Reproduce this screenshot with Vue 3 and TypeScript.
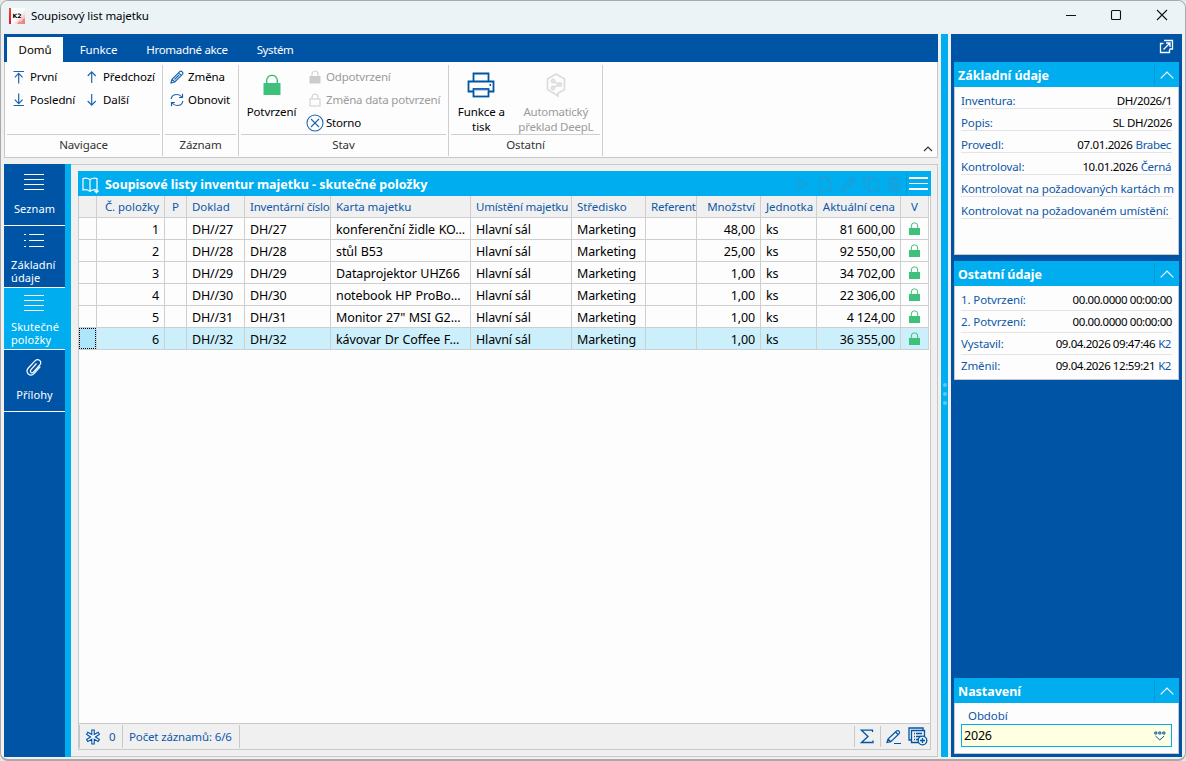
<script setup lang="ts">
interface Row {
  no: number
  card: string
  qty: string
  price: string
}

const columns: { label: string; cls: string }[] = [
  { label: '', cls: '' },
  { label: 'Č. položky', cls: 'num' },
  { label: 'P', cls: 'mid' },
  { label: 'Doklad', cls: '' },
  { label: 'Inventární číslo', cls: 'tight' },
  { label: 'Karta majetku', cls: '' },
  { label: 'Umístění majetku', cls: 'tight' },
  { label: 'Středisko', cls: '' },
  { label: 'Referent', cls: 'tight' },
  { label: 'Množství', cls: 'num' },
  { label: 'Jednotka', cls: 'unit' },
  { label: 'Aktuální cena', cls: 'num' },
  { label: 'V', cls: 'mid' },
]

const rows: Row[] = [
  { no: 1, card: 'konferenční židle KO...', qty: '48,00', price: '81 600,00' },
  { no: 2, card: 'stůl B53', qty: '25,00', price: '92 550,00' },
  { no: 3, card: 'Dataprojektor UHZ66', qty: '1,00', price: '34 702,00' },
  { no: 4, card: 'notebook HP ProBo...', qty: '1,00', price: '22 306,00' },
  { no: 5, card: 'Monitor 27" MSI G2...', qty: '1,00', price: '4 124,00' },
  { no: 6, card: 'kávovar Dr Coffee F...', qty: '1,00', price: '36 355,00' },
]

const basics = [
  { label: 'Inventura:', value: 'DH/2026/1', link: '' },
  { label: 'Popis:', value: 'SL DH/2026', link: '' },
  { label: 'Provedl:', value: '07.01.2026', link: 'Brabec' },
  { label: 'Kontroloval:', value: '10.01.2026', link: 'Černá' },
  { label: 'Kontrolovat na požadovaných kartách m', value: '', link: '' },
  { label: 'Kontrolovat na požadovaném umístění:', value: '', link: '' },
]

const others = [
  { label: '1. Potvrzení:', value: '00.00.0000 00:00:00', link: '' },
  { label: '2. Potvrzení:', value: '00.00.0000 00:00:00', link: '' },
  { label: 'Vystavil:', value: '09.04.2026 09:47:46', link: 'K2' },
  { label: 'Změnil:', value: '09.04.2026 12:59:21', link: 'K2' },
]
</script>

<template>
  <div class="window">
    <header class="titlebar">
      <svg class="logo" width="16" height="16" viewBox="0 0 16 16">
        <defs>
          <linearGradient id="lg" x1="0" y1="0" x2="0" y2="1">
            <stop offset="0" stop-color="#f04a28" /><stop offset="1" stop-color="#e01040" />
          </linearGradient>
          <linearGradient id="lf" x1="0" y1="0" x2="1" y2="1">
            <stop offset=".5" stop-color="#fff" /><stop offset="1" stop-color="#f0908c" />
          </linearGradient>
        </defs>
        <rect x="2" width="14" height="16" fill="url(#lf)" />
        <rect width="2" height="16" fill="url(#lg)" />
        <path d="M8 16l2-3 2 1 2-3 2-1v6z" fill="#ee7770" opacity=".7" />
        <text x="3.6" y="10" class="logo-text" textLength="9" lengthAdjust="spacingAndGlyphs">K2</text>
      </svg>
      <span class="app-title">Soupisový list majetku</span>
      <svg class="winbtns" width="106" height="14" viewBox="0 0 106 14" fill="none" stroke="#111" stroke-width="1.1">
        <path d="M1 7.5h10" />
        <rect x="46.5" y="2.5" width="9" height="9" rx="1" />
        <path d="M92 2l10 10M102 2l-10 10" />
      </svg>
    </header>

    <div class="body">
      <div class="left">
        <nav class="tabs">
          <span class="tab active">Domů</span>
          <span class="tab t2">Funkce</span>
          <span class="tab t3">Hromadné akce</span>
          <span class="tab t4">Systém</span>
        </nav>
        <section class="ribbon">
          <div class="group g-nav">
            <div class="gbody">
              <div class="col c-first">
                <div class="cmd"><svg class="ic" viewBox="0 0 14 14"><path d="M1.500 1.500h10.500M6.700 13.500V3.500M2.800 7.300L6.700 3.400l3.900 3.900" /></svg>První</div>
                <div class="cmd"><svg class="ic" viewBox="0 0 14 14"><path d="M1.500 12.500h10.500M6.700 .5v10M2.800 6.700L6.700 10.600l3.900-3.900" /></svg>Poslední</div>
              </div>
              <div class="col c-second">
                <div class="cmd"><svg class="ic" viewBox="0 0 14 14"><path d="M6.700 13V2M2.700 6L6.700 1.900 10.700 6" /></svg>Předchozí</div>
                <div class="cmd"><svg class="ic" viewBox="0 0 14 14"><path d="M6.700 1v11M2.700 8L6.700 12.100 10.700 8" /></svg>Další</div>
              </div>
            </div>
            <div class="gname">Navigace</div>
          </div>
          <div class="group g-rec">
            <div class="gbody">
              <div class="col c-rec">
                <div class="cmd"><svg class="ic" viewBox="0 0 14 14"><path d="M1 13l1-3.800L9.700 1.600q1.300-1 2.500.2t.2 2.500L4.800 12zM8.500 2.800l2.700 2.700M2 9.200L4.800 12M4.500 9.500L9 5" /></svg>Změna</div>
                <div class="cmd"><svg class="ic" viewBox="0 0 14 14"><path d="M1.200 6C1.500 3 4 1.500 7 1.500c2 0 3.700 1 4.800 2.500M12.500.8V4.500H9M12.800 8c-.3 3-2.800 4.500-5.800 4.500-2 0-3.700-1-4.800-2.500M1.500 13.200V9.500H5" /></svg>Obnovit</div>
              </div>
            </div>
            <div class="gname">Záznam</div>
          </div>
          <div class="group g-state">
            <div class="gbody">
              <div class="big b-lock">
                <svg width="18" height="22" viewBox="0 0 18 22"><path d="M3.700 9V6.500a5.300 5.300 0 0110.600 0V9" fill="none" stroke="#3ec27b" stroke-width="1.400" /><rect x=".5" y="9" width="17" height="12" fill="#3ec27b" /></svg>
                <span>Potvrzení</span>
              </div>
              <div class="col c-state">
                <div class="cmd off"><svg class="ic2" viewBox="0 0 16 16"><path d="M5 7V5a3 3 0 016 0v2" class="gr" /><rect x="2.500" y="7" width="11" height="7.500" fill="#ccc" /></svg>Odpotvrzení</div>
                <div class="cmd off"><svg class="ic2" viewBox="0 0 16 16"><path d="M5 7V5a3 3 0 016 0v2" class="gr" /><rect x="3" y="7" width="10" height="7" class="gr" /></svg>Změna data potvrzení</div>
                <div class="cmd"><svg class="ic3" viewBox="0 0 18 18"><circle cx="9" cy="9" r="8" /><path d="M5 5l8 8M13 5l-8 8" /></svg>Storno</div>
              </div>
            </div>
            <div class="gname">Stav</div>
          </div>
          <div class="group g-other">
            <div class="gbody">
              <div class="big b-print">
                <svg width="28" height="26" viewBox="0 0 28 26" fill="none" stroke="#0054a6" stroke-width="1.800"><path d="M6.500 9V1.500h15V9M6 19.500H1.500V9.500h25v10H22" /><rect x="6.500" y="17" width="15" height="7.500" /><path d="M7 18.300h14" stroke="#9cc0e0" stroke-width="1" /><path d="M22.500 13h1.500" /></svg>
                <span>Funkce a<br />tisk</span>
              </div>
              <div class="big b-deepl off">
                <svg width="20" height="24" viewBox="0 0 20 24" fill="none" stroke="#ddd" stroke-width="1.800"><path d="M10 1l8.500 5v10.500L12 20.200V23l-4.500-3L1.500 16.500V6z" /><circle cx="7" cy="8" r="1.500" /><circle cx="14" cy="11.500" r="1.500" /><circle cx="7" cy="15" r="1.500" /><path d="M8.500 9l4 2M8.500 14l4-2" /></svg>
                <span>Automatický<br />překlad DeepL</span>
              </div>
            </div>
            <div class="gname">Ostatní</div>
          </div>
          <svg class="collapse" width="10" height="6" viewBox="0 0 10 6"><path d="M1 5l4-4 4 4" fill="none" stroke="#333" stroke-width="1.200" /></svg>
        </section>

        <div class="work">
          <aside class="side">
            <div class="sitem"><svg class="lines" viewBox="0 0 20 18"><path d="M0 1.500h20M0 6.500h20M0 11.500h20M0 16.500h20" /></svg><span>Seznam</span></div>
            <div class="sitem s2"><svg class="lines" viewBox="0 0 20 18"><path d="M5 2.500h15M5 8.500h15M5 14.500h15M0 2.500h2M0 8.500h2M0 14.500h2" /></svg><span>Základní<br />údaje</span></div>
            <div class="sitem s3"><svg class="lines" viewBox="0 0 20 18"><path d="M0 1.500h20M0 6.500h20M0 11.500h20M0 16.500h20" /></svg><span>Skutečné<br />položky</span></div>
            <div class="sitem s4"><svg class="clipicon" width="18" height="20" viewBox="0 0 18 20" fill="none" stroke="#fff" stroke-width="1.200"><path d="M11.500 5.500L6 11.700q-1.200 1.600 0 2.700 1.300 1 2.600-.4l6.200-7q2-2.500-.1-4.600-2.400-1.900-4.700.4L3.300 10q-2.600 3.200 0 6 3 2.500 6-.6l6-6.700" /></svg><span>Přílohy</span></div>
          </aside>
          <main class="main">
            <div class="grid">
              <div class="ghead">
                <svg class="book" width="19" height="17" viewBox="0 0 19 17" fill="none" stroke="#fff" stroke-width="1.200"><path d="M8 2.500Q4.500.2 1 1.500v11.500q3.500-1 7 1.200 3.500-2.200 7-1.200V1.500Q11.500.2 8 2.500zM8 2.500V14" /><path d="M11.500 13.500h6l-3 3z" fill="#fff" stroke="none" /></svg>
                <span class="gtitle">Soupisové listy inventur majetku - skutečné položky</span>
                <svg class="tools" width="105" height="18" viewBox="0 0 105 18" fill="none" stroke="#239bd0" stroke-width="1.200">
                  <path d="M1 4v10l9-5z" /><path d="M23 2h7l3.500 3.500V16H23zM30 2v4h3.500" />
                  <path d="M45 16l1-4 9-9 3 2-9 9zM54 4l3 3" /><path d="M70 13h-3V2h8v2M71.500 5H81v11h-9.500z" />
                  <path d="M91 4.500h12M92.500 4.500v11.500h9V4.500M95 4.500V2.500h4v2M95 7.500v6M97 7.500v6M99 7.500v6" />
                </svg>
                <span class="menu"><i></i><i></i><i></i></span>
              </div>
              <div class="table">
                <div class="tr th"><div v-for="(c, i) in columns" :key="i" class="td" :class="c.cls">{{ c.label }}</div></div>
                <div v-for="r in rows" :key="r.no" class="tr" :class="{ sel: r.no === 6 }">
                  <div class="td mark"></div>
                  <div class="td num">{{ r.no }}</div>
                  <div class="td"></div>
                  <div class="td">DH//{{ r.no + 26 }}</div>
                  <div class="td">DH/{{ r.no + 26 }}</div>
                  <div class="td card">{{ r.card }}</div>
                  <div class="td">Hlavní sál</div>
                  <div class="td">Marketing</div>
                  <div class="td"></div>
                  <div class="td num">{{ r.qty }}</div>
                  <div class="td">ks</div>
                  <div class="td num">{{ r.price }}</div>
                  <div class="td lock"><svg width="11" height="14" viewBox="0 0 11 14"><path d="M2.300 6V4a3.200 3.200 0 016.400 0v2" fill="none" stroke="#3ec27b" /><rect y="6" width="11" height="7" fill="#3ec27b" /></svg></div>
                </div>
              </div>
              <div class="gfoot">
                <div class="fcell f1"><svg width="16" height="16" viewBox="0 0 16 16" fill="#fff" stroke="#0054a6" stroke-width="1.100"><path d="M6.800 1h2.400v4.600l4-2.300 1.200 2L10.400 8l4 2.500-1.200 2-4-2.300V15H6.800v-4.800l-4 2.300-1.200-2 4-2.500-4-2.700 1.200-2 4 2.300z" /></svg><span>0</span></div>
                <div class="fcell f2">Počet záznamů: 6/6</div>
                <div class="fend">
                  <div class="sum"><svg width="14" height="15" viewBox="0 0 14 15"><path d="M12.500 3V1.200H1.500L8 7.500l-6.500 6h11.500v-2" fill="none" stroke="#0054a6" stroke-width="1.300" /></svg></div>
                  <svg class="edit" width="16" height="16" viewBox="0 0 16 16" fill="none" stroke="#0054a6" stroke-width="1.200"><path d="M1 13.500l1-3.500 8.500-8q1.500-.8 2.500.2t.2 2.500L4.800 12.700zM9.500 3l2.500 2.500M2 10l2.800 2.700M8 14.500h7" /></svg>
                  <svg class="add" width="20" height="19" viewBox="0 0 20 19" fill="none" stroke="#0054a6" stroke-width="1.300"><path d="M3 13H1V1h14v2" /><path d="M11 15.500H3.500V3.500h13v6" /><path d="M6 6.500h1M8 6.500h6M6 9.500h1M8 9.500h5M6 12.500h1M8 12.500h2" /><circle cx="14.500" cy="13.500" r="4.300" fill="#f0f0f0" /><path d="M12 13.500h5M14.500 11v5" /></svg>
                </div>
              </div>
            </div>
          </main>
        </div>
      </div>

      <div class="splitter"><i></i><i></i><i></i></div>

      <div class="right">
        <div class="rtop"><svg width="15" height="15" viewBox="0 0 15 15" fill="none" stroke="#fff" stroke-width="1.300"><path d="M5 1.500h8.500V10h-3M4.500 4.500h-3v9h9v-3M4.500 10.500L10.500 4.500M7 4h4v4" /></svg></div>
        <section class="panel p1">
          <div class="phead"><span>Základní údaje</span><i><svg class="chev" viewBox="0 0 14 8"><path d="M.7 7.300L7 1l6.300 6.300" /></svg></i></div>
          <div class="pbody">
            <div v-for="b in basics" :key="b.label" class="prow"><label>{{ b.label }}</label><span v-if="b.value" class="val">{{ b.value }}<em v-if="b.link">{{ b.link }}</em></span></div>
          </div>
        </section>
        <section class="panel p2">
          <div class="phead"><span>Ostatní údaje</span><i><svg class="chev" viewBox="0 0 14 8"><path d="M.7 7.300L7 1l6.300 6.300" /></svg></i></div>
          <div class="pbody">
            <div v-for="b in others" :key="b.label" class="prow stamp"><label>{{ b.label }}</label><span class="val">{{ b.value }}<em v-if="b.link">{{ b.link }}</em></span></div>
          </div>
        </section>
        <section class="panel p3">
          <div class="phead"><span>Nastavení</span><i><svg class="chev" viewBox="0 0 14 8"><path d="M.7 7.300L7 1l6.300 6.300" /></svg></i></div>
          <div class="pbody">
            <label class="flabel">Období</label>
            <div class="select"><span>2026</span><svg width="12" height="10" viewBox="0 0 12 10" fill="none" stroke="#0054a6"><path d="M.8 1h2v2h-2zM4.800 1h2v2h-2zM8.800 1h2v2h-2zM1.500 5l4.300 4 4.300-4" /></svg></div>
          </div>
        </section>
      </div>
    </div>
  </div>
</template>

<style>
html, body { margin: 0; background: #e6e6e6; overflow: hidden; }
</style>

<style scoped>
* { box-sizing: border-box; }
.window { width: 1186px; height: 761px; border: 1px solid #a9a9a9; border-bottom-width: 2px; border-radius: 8px; overflow: hidden; background: #f0f0f0; font-family: "Noto Sans", "Open Sans", sans-serif; font-size: 11.5px; letter-spacing: -0.1px; color: #000; display: flex; flex-direction: column; }
.titlebar { height: 30px; flex: none; background: #ebf3f7; display: flex; align-items: center; padding: 0 14px 2px 8px; }
.logo { margin: 1px 6px 0 0; }
.logo-text { font: bold 6px "DejaVu Sans", sans-serif; fill: #000; }
.app-title { flex: 1; letter-spacing: -.1px; }
.body { flex: 1; display: flex; padding: 3px 3px 2px; min-height: 0; }
.left { width: 934px; display: flex; flex-direction: column; }
.tabs { height: 28px; flex: none; background: #0054a6; display: flex; padding: 3px 0 0 3px; color: #fff; }
.tab { line-height: 25px; height: 25px; text-align: center; white-space: nowrap; letter-spacing: -.1px; }
.tab.active { background: #fdfdfd; color: #000; width: 56px; }
.t2 { width: 71px; } .t3 { width: 106px; letter-spacing: -.3px; } .t4 { width: 70px; letter-spacing: -.4px; }
.ribbon { height: 96px; flex: none; background: #fdfdfd; border: 1px solid #c8c8c8; border-top: 0; padding: 3px 0 0; display: flex; position: relative; }
.group { height: 91px; border-right: 1px solid #cfcfcf; padding: 0 2px; display: flex; flex-direction: column; }
.g-nav { width: 158px; } .g-rec { width: 76px; } .g-state { width: 210px; } .g-other { width: 154px; }
.gbody { height: 70px; display: flex; border-bottom: 1px solid #cfcfcf; }
.gname { text-align: center; line-height: 20px; color: #333; }
.cmd { height: 23px; display: flex; align-items: center; gap: 4px; white-space: nowrap; }
.off { color: #9b9b9b; }
.ic { width: 14px; height: 14px; flex: none; fill: none; stroke: #1c66b2; stroke-width: 1.2; }
.ic2 { width: 16px; height: 16px; flex: none; }
.gr { fill: none; stroke: #d4d4d4; stroke-width: 1.2; }
.ic3 { width: 18px; height: 18px; flex: none; fill: none; stroke: #1c66b2; stroke-width: 1.1; margin: 0 -1px; }
.c-first { width: 73px; padding-left: 5px; }
.c-second { padding-left: 5px; }
.c-rec { padding-left: 5px; }
.c-state { padding-left: 5px; }
.c-state .cmd { gap: 3px; letter-spacing: -.2px; }
.big { display: flex; flex-direction: column; align-items: center; text-align: center; line-height: 15px; white-space: nowrap; }
.b-lock { width: 61px; padding-top: 9px; gap: 8px; }
.b-print { width: 61px; padding-top: 7px; gap: 6px; }
.b-deepl { width: 89px; padding-top: 8px; gap: 7px; letter-spacing: -.25px; }
.collapse { position: absolute; right: 4px; bottom: 5px; }
.work { flex: 1; margin-top: 6px; display: flex; min-height: 0; }
.side { width: 67px; background: #0054a6; border-right: 6px solid #00adef; color: #fff; }
.sitem { height: 62px; border-bottom: 1px solid #fff; padding-top: 9px; display: flex; flex-direction: column; align-items: center; line-height: 13px; gap: 11px; font-size: 11px; letter-spacing: .1px; }
.lines { width: 20px; height: 18px; flex: none; stroke: #fff; stroke-width: 1.1; fill: none; position: relative; left: -.5px; }
.clipicon { position: relative; left: -.5px; }
.s2, .s3 { padding-top: 6px; gap: 8px; }
.s2 span { width: 47px; } .s3 span { width: 47px; }
.s3 { background: #00adef; }
.s4 { padding-top: 8px; gap: 10px; }
.main { flex: 1; border: 1px solid #c8c8c8; border-left: 0; padding: 6px 6px 6px 7px; min-width: 0; }
.grid { height: 579px; width: 853px; display: flex; flex-direction: column; border: 1px solid #c8c8c8; border-top: 0; background: #fdfdfd; }
.ghead { height: 25px; flex: none; margin: 0 -1px; background: #00adef; color: #fff; display: flex; align-items: center; padding: 0 3px 0 4px; }
.book { margin: 3px 4px 0 0; }
.gtitle { flex: 1; font-size: 12.5px; font-weight: bold; letter-spacing: -.03px; white-space: nowrap; padding-top: 1px; }
.tools { margin-right: 4px; }
.menu { width: 22px; height: 21px; border-left: 1px solid #0898cf; padding: 4px 0 0 2px; display: flex; flex-direction: column; gap: 4px; }
.menu i { height: 1.5px; background: #fff; }
.table { flex: 1; }
.tr { width: 850px; display: grid; grid-template-columns: 18px 68px 22px 58px 86px 140px 101px 74px 51px 64px 56px 84px 28px; height: 22px; font-size: 12.5px; letter-spacing: -.15px; }
.td { border-right: 1px solid #cfcfcf; border-bottom: 1px solid #cfcfcf; padding: 0 5px; line-height: 24px; white-space: nowrap; overflow: hidden; }
.th { background: #f0f0f0; color: #0f57a8; font-size: 11.5px; letter-spacing: -.05px; }
.th .td { line-height: 21px; }
.num { text-align: right; } .mid { text-align: center; }
.card { letter-spacing: -.1px; word-spacing: .5px; }
.unit { padding-right: 0; }
.tight { padding-right: 0; letter-spacing: -.2px; }
.sel { background: #cceffc; }
.sel .mark { background: #ade5fb; border: 1px dotted #000; margin: 0 1px 1px 0; box-shadow: 1px 1px 0 #cfcfcf; overflow: visible; }
.lock { display: flex; align-items: center; justify-content: center; padding: 0; }
.gfoot { height: 26px; flex: none; border-top: 1px solid #c8c8c8; background: #f0f0f0; color: #0f57a8; display: flex; align-items: center; }
.fcell { height: 23px; border-right: 1px solid #c8c8c8; display: flex; align-items: center; }
.f1 { width: 44px; border-left: 1px solid #c8c8c8; padding-left: 5px; gap: 8px; }
.f2 { width: 117px; padding-left: 6px; white-space: nowrap; letter-spacing: -.14px; }
.fend { margin-left: auto; display: flex; align-items: center; }
.sum { width: 27px; height: 21px; border: 1px solid #c8c8c8; border-width: 0 1px; padding: 3px 0 0 5px; }
.edit { margin-left: 5px; } .add { margin: 0 2px 0 6px; }
.splitter { width: 7px; margin: 0 3px; padding-bottom: 3px; background: #00adef; display: flex; flex-direction: column; justify-content: center; align-items: center; gap: 5px; }
.splitter i { width: 4px; height: 4px; border-radius: 2px; background: #5cc9f5; }
.right { width: 231px; background: #0054a6; padding: 0 3px 3px; display: flex; flex-direction: column; }
.rtop { height: 28px; flex: none; display: flex; justify-content: flex-end; padding: 5px 5px 0 0; }
.panel { background: #fdfdfd; }
.phead { height: 25px; background: #00adef; color: #fff; display: flex; align-items: center; justify-content: space-between; padding-left: 4px; font-size: 12.5px; font-weight: bold; letter-spacing: -.03px; }
.phead span { padding-top: 1px; }
.phead i { width: 25px; height: 21px; border-left: 1px solid #0898cf; display: flex; align-items: center; justify-content: center; }
.chev { width: 14px; height: 8px; fill: none; stroke: #fff; stroke-width: 1.2; }
.pbody { border: 1px solid #c8c8c8; border-top: 0; padding: 0 6px; overflow: hidden; }
.p1 { height: 193px; } .p1 .pbody { height: 168px; }
.p2 { height: 119px; margin-top: 6px; } .p2 .pbody { height: 94px; padding-top: 3px; }
.p3 { height: 76px; margin-top: auto; } .p3 .pbody { height: 51px; }
.prow { height: 22px; border-bottom: 1px solid #e4e4e4; display: flex; justify-content: space-between; line-height: 27px; white-space: nowrap; letter-spacing: -.12px; }
.prow label, .flabel { color: #0f57a8; }
.val { letter-spacing: -.35px; }
.stamp { line-height: 21px; }
.stamp .val { letter-spacing: -.42px; }
.stamp:last-child { border: 0; }
.val em { font-style: normal; color: #0f57a8; margin-left: 3px; margin-right: 1px; }
.flabel { display: block; padding: 5px 0 0 7px; line-height: 16px; }
.select { height: 23px; border: 1px solid #00adef; background: #ffffe1; display: flex; align-items: center; justify-content: space-between; padding: 0 5px 0 2px; font-size: 12.5px; letter-spacing: -.2px; }
</style>
